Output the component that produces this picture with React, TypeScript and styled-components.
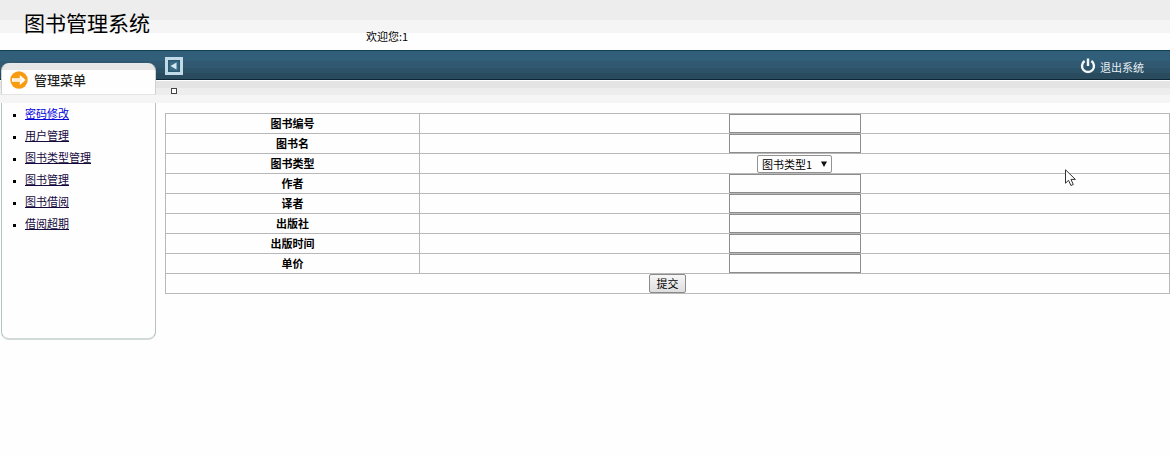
import React from "react";
import styled, { createGlobalStyle } from "styled-components";

const GlobalStyle = createGlobalStyle`
  * { box-sizing: border-box; }
  body {
    margin: 0;
    background: #fefefe;
    color: #000;
    font-family: "Noto Sans CJK SC", sans-serif;
    font-size: 11px;
    line-height: 16px;
  }
`;

const Header = styled.header`
  display: flex;
  align-items: flex-start;
  height: 50px;
  background: linear-gradient(#ededed 0 20px, #f5f5f5 20px 33px, #fefefe 33px);
`;

const Title = styled.h1`
  flex: 0 0 366px;
  margin: 0;
  padding: 7px 0 0 24px;
  font-size: 21px;
  line-height: 30px;
  font-weight: 400;
`;

const Welcome = styled.p`
  margin: 0;
  padding-top: 28px;
`;

const Workspace = styled.div`
  display: grid;
  grid-template-columns: 157px minmax(0, 1fr);
  column-gap: 8px;
  background: linear-gradient(
    #123f55 0 1px,
    #315f79 1px 11px,
    #315871 11px 18px,
    #2b5266 18px 23px,
    #2a4b5d 23px 29px,
    #0c2636 29px 30px,
    #fefefe 30px 31px,
    #e4e4e4 31px 38px,
    #ededed 38px 45px,
    #f5f5f5 45px 53px,
    #fefefe 53px
  );
`;

const Sidebar = styled.nav`
  display: flex;
  flex-direction: column;
  padding: 13px 1px 0;
`;

const MenuHeading = styled.h2`
  display: flex;
  align-items: center;
  gap: 6px;
  height: 32px;
  margin: 0;
  padding: 1px 0 0 8px;
  border: 1px solid #ccd4d0;
  border-top-color: #e6eaea;
  border-bottom-color: #e4e4e4;
  border-radius: 8px 8px 0 0;
  background: linear-gradient(#e6e6e6 0 6px, #fefefe 6px);
  font-size: 13px;
  line-height: 20px;
  font-weight: 500;
  color: #222;
`;

const MenuList = styled.ul`
  min-height: 237px;
  margin: 8px 0 0;
  padding: 0 0 0 11px;
  border: 1px solid #b6c2bb;
  border-top: 0;
  border-bottom: 2px solid #d2dad5;
  border-radius: 0 0 8px 8px;
  background: #fefefe;
  list-style: none;
`;

const MenuItem = styled.li`
  display: flex;
  align-items: center;
  gap: 9px;
  height: 22px;
  padding-bottom: 3px;

  &::before {
    content: "";
    width: 3px;
    height: 3px;
    margin-top: 5px;
    background: #000;
  }
`;

const MenuLink = styled.a<{ $fresh?: boolean }>`
  color: ${(p) => (p.$fresh ? "#0000dd" : "#14083c")};
  text-decoration: underline;
  text-underline-offset: 1px;
`;

const Toolbar = styled.div`
  display: flex;
  align-items: center;
  justify-content: space-between;
  height: 31px;
  padding-right: 26px;
`;

const CollapseButton = styled.button`
  display: flex;
  padding: 0;
  border: 0;
  background: none;
`;

const Logout = styled.a`
  display: flex;
  align-items: center;
  gap: 4px;
  color: #e8eef2;
  text-decoration: none;

  span {
    padding-top: 3px;
  }
`;

const Breadcrumb = styled.div`
  height: 32px;
  padding: 7px 0 0 6px;
`;

const Marker = styled.div`
  width: 6px;
  height: 6px;
  border: 1px solid #444;
  background: #fefefe;
`;

const FormTable = styled.table`
  width: 100%;
  table-layout: fixed;
  border-collapse: collapse;

  th,
  td {
    height: 20px;
    padding: 0;
    border: 1px solid #b8b8b8;
    text-align: center;
    line-height: 16px;
  }

  th {
    padding-bottom: 2px;
    font-weight: 700;
  }
`;

const LabelColumn = styled.col`
  width: 25.3%;
`;

const TextInput = styled.input`
  display: block;
  width: 132px;
  height: 19px;
  margin: 0 auto;
  padding: 0 2px;
  border: 1px solid #8c8c8c;
  background: #fefefe;
  font: inherit;
`;

const SelectBox = styled.div`
  position: relative;
  width: 75px;
  margin: 0 auto;

  svg {
    position: absolute;
    top: 6px;
    right: 5px;
    pointer-events: none;
  }
`;

const Select = styled.select`
  display: block;
  appearance: none;
  width: 100%;
  height: 18px;
  padding: 0 0 2px 4px;
  border: 1px solid #929292;
  border-radius: 2px;
  background: #fefefe;
  color: #000;
  font: inherit;
`;

const SubmitButton = styled.button`
  display: block;
  width: 37px;
  height: 19px;
  margin: 0 auto;
  padding: 0 0 2px;
  border: 1px solid #8a8a8a;
  border-radius: 2px;
  background: linear-gradient(#f6f6f6, #dedede);
  color: #000;
  font: inherit;
`;

const Pointer = styled.svg`
  position: absolute;
  left: 1065px;
  top: 169px;
  pointer-events: none;
`;

const menu = ["密码修改", "用户管理", "图书类型管理", "图书管理", "图书借阅", "借阅超期"];

const fields = [
  { id: "code", label: "图书编号" },
  { id: "name", label: "图书名" },
  { id: "type", label: "图书类型", options: ["图书类型1"] },
  { id: "author", label: "作者" },
  { id: "translator", label: "译者" },
  { id: "press", label: "出版社" },
  { id: "date", label: "出版时间" },
  { id: "price", label: "单价" },
];

export default function App() {
  return (
    <>
      <GlobalStyle />
      <Header>
        <Title>图书管理系统</Title>
        <Welcome>欢迎您:1</Welcome>
      </Header>
      <Workspace>
        <Sidebar>
          <MenuHeading>
            <svg width="18" height="18" viewBox="0 0 18 18" aria-hidden="true">
              <circle cx="9" cy="9" r="8.7" fill="#f79c10" />
              <path d="M2 7.2h7.8V4l5.8 5-5.8 5v-3.2H2z" fill="#fff" />
              <path d="M3.5 8.5h8v1h-8z" fill="#fbdca8" />
            </svg>
            管理菜单
          </MenuHeading>
          <MenuList>
            {menu.map((item, i) => (
              <MenuItem key={item}>
                <MenuLink href="#" $fresh={i === 0}>
                  {item}
                </MenuLink>
              </MenuItem>
            ))}
          </MenuList>
        </Sidebar>
        <main>
          <Toolbar>
            <CollapseButton aria-label="收起菜单">
              <svg width="18" height="18" viewBox="0 0 18 18" aria-hidden="true">
                <rect width="18" height="18" fill="#c0dae8" />
                <rect x="3" y="3" width="12" height="12" fill="#2c5870" />
                <rect x="4.5" y="4.5" width="9" height="9" fill="#3b6c88" />
                <path d="M11.5 5.5v7L5.5 9z" fill="#d4e8f2" />
              </svg>
            </CollapseButton>
            <Logout href="#">
              <svg
                width="16"
                height="16"
                viewBox="0 0 16 16"
                fill="none"
                stroke="#f4f7f8"
                strokeWidth="2.4"
                aria-hidden="true"
              >
                <path d="M4.6 3.1a6 6 0 1 0 6.8 0" />
                <path d="M8 0.5v7.5" />
              </svg>
              <span>退出系统</span>
            </Logout>
          </Toolbar>
          <Breadcrumb>
            <Marker />
          </Breadcrumb>
          <form onSubmit={(e) => e.preventDefault()}>
            <FormTable>
              <colgroup>
                <LabelColumn />
                <col />
              </colgroup>
              <tbody>
                {fields.map((f) => (
                  <tr key={f.id}>
                    <th scope="row">
                      <label htmlFor={f.id}>{f.label}</label>
                    </th>
                    <td>
                      {f.options ? (
                        <SelectBox>
                          <Select id={f.id}>
                            {f.options.map((o) => (
                              <option key={o}>{o}</option>
                            ))}
                          </Select>
                          <svg width="6" height="6" viewBox="0 0 6 6" aria-hidden="true">
                            <path d="M0 0.5h6L3 6z" fill="#111" />
                          </svg>
                        </SelectBox>
                      ) : (
                        <TextInput id={f.id} type="text" />
                      )}
                    </td>
                  </tr>
                ))}
                <tr>
                  <td colSpan={2}>
                    <SubmitButton type="submit">提交</SubmitButton>
                  </td>
                </tr>
              </tbody>
            </FormTable>
          </form>
        </main>
      </Workspace>
      <Pointer width="12" height="18" viewBox="0 0 12 18" aria-hidden="true">
        <path
          d="M0.5 0.8v13.4l3.1-2.9 2.3 5.2 2.4-1-2.3-5.1h4.4z"
          fill="#fff"
          stroke="#333"
          strokeWidth="1"
        />
      </Pointer>
    </>
  );
}
